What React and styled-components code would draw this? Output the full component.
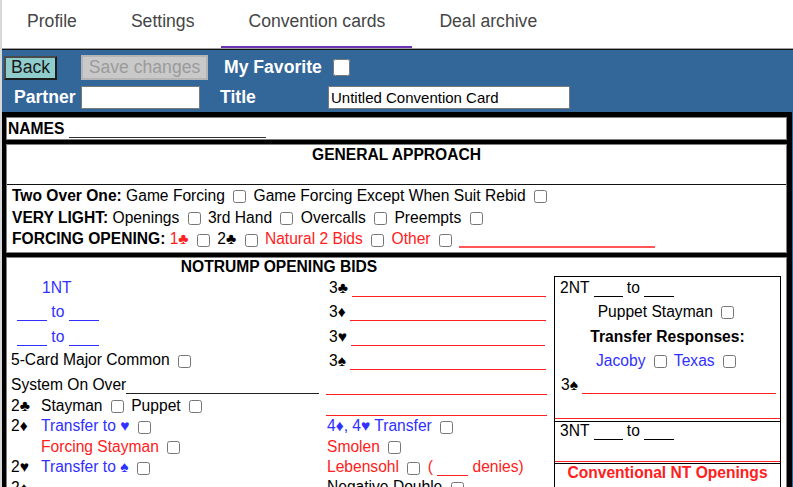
import styled, { createGlobalStyle } from "styled-components";

const BLUE = "#3030ff";
const RED = "#ff2020";

const GlobalStyle = createGlobalStyle`
  html, body {
    margin: 0;
    padding: 0;
    background: #fff;
    overflow: hidden;
  }
  body {
    font-family: "Liberation Sans", Arial, sans-serif;
    color: #000;
  }
`;

const Page = styled.div`
  border-left: 2px solid #d9d9d9;
  height: 487px;
  overflow: hidden;
`;

const TabBar = styled.nav`
  display: flex;
  height: 48px;
  margin-left: -2px;
  border-bottom: 1px solid #a0a0a0;
`;

const Tab = styled.div`
  box-sizing: border-box;
  height: 48px;
  padding: 0 27px;
  font-size: 17.6px;
  line-height: 42px;
  color: #454545;
  border-bottom: 2px solid ${(p) => (p.$active ? "#6c34b4" : "transparent")};
`;

const Editor = styled.section`
  background: #336699;
  border-top: 1px solid #111;
`;

const HeaderGrid = styled.div`
  display: grid;
  grid-template-columns: 77px 137px 110px 1fr;
  grid-template-rows: 27px 25px;
  row-gap: 4px;
  padding: 4px 0 2px;
  align-items: center;
`;

const HeadCell = styled.div`
  display: flex;
  align-items: center;
  margin-left: ${(p) => p.$indent || 0}px;
`;

const Button = styled.button`
  box-sizing: border-box;
  height: ${(p) => (p.$disabled ? 25 : 24)}px;
  width: ${(p) => (p.$disabled ? 127 : 53)}px;
  padding: 0;
  font: 17.6px "Liberation Sans", Arial, sans-serif;
  line-height: 1;
  border: 2px solid;
  background: ${(p) => (p.$disabled ? "#c9c9c9" : "#8fcccc")};
  color: ${(p) => (p.$disabled ? "#9b9b9b" : "#1a1a1a")};
  border-color: ${(p) =>
    p.$disabled ? "#b4b4b4" : "#4a4a4a #1c1c1c #1c1c1c #4a4a4a"};
`;

const HeadLabel = styled.span`
  color: #fff;
  font-weight: bold;
  font-size: 17.6px;
`;

const BigCheck = styled.input.attrs({ type: "checkbox" })`
  width: 17px;
  height: 17px;
  margin: 0;
`;

const TextField = styled.input.attrs({ type: "text" })`
  box-sizing: border-box;
  width: ${(p) => p.$w}px;
  height: 23px;
  margin: 0;
  padding: 0 2px;
  border: 1px solid #7a7a7a;
  font: 15px "Liberation Sans", Arial, sans-serif;
  color: #000;
  background: #fff;
`;

const Card = styled.div`
  background: #000;
  padding: 5px 5px 0 4px;
  margin-right: 1px;
  display: flex;
  flex-direction: column;
  gap: 4px;
  font-size: 15.6px;
`;

const Box = styled.div`
  background: #fff;
  border: 1px solid #808080;
`;

const NamesRow = styled.div`
  height: 21px;
  line-height: 21px;
  padding-left: 1px;
  white-space: nowrap;
`;

const Bold = styled.b`
  font-weight: bold;
`;

const Txt = styled.span`
  color: ${(p) => p.$c};
`;

const Title = styled.div`
  box-sizing: border-box;
  height: 40px;
  padding-top: 1px;
  text-align: center;
  font-weight: bold;
  line-height: 17px;
  border-bottom: 1px solid #111;
`;

const GARow = styled.div`
  height: 21.7px;
  line-height: 21.7px;
  padding-left: 5px;
  white-space: nowrap;
  &:last-child {
    margin-bottom: 2px;
  }
`;

const Check = styled.input.attrs({ type: "checkbox" })`
  width: 13px;
  height: 13px;
  margin: 3px 3px 3px 4px;
  vertical-align: middle;
`;

const Blank = styled.span`
  display: inline-block;
  width: ${(p) => p.$w}px;
  height: 12px;
  border-bottom: ${(p) => p.$t || 1}px solid ${(p) => p.$c || "currentColor"};
  vertical-align: -4px;
`;

const NTGrid = styled.div`
  display: grid;
  grid-template-columns: 318px 226px 1fr;
  grid-template-rows: 18px 23px 25px 25px 24px 23px 21px 20px 21px 20px 20px;
`;

const NTHeader = styled.div`
  grid-column: 1 / 3;
  grid-row: 1;
  text-align: center;
  font-weight: bold;
  line-height: 18px;
`;

const NTCell = styled.div`
  grid-column: ${(p) => p.$col};
  align-self: center;
  white-space: nowrap;
  padding-left: ${(p) => p.$pad ?? 4}px;
  color: ${(p) => p.$c || "inherit"};
`;

const RuleCell = styled.div`
  grid-column: 2;
  align-self: end;
  height: 1px;
  margin: 0 4px 1px 1px;
  background: ${RED};
`;

const Suit = styled.span`
  display: inline-block;
  width: 30px;
  color: #000;
`;

const Col3 = styled.div`
  grid-column: 3;
  grid-row: 2 / 12;
  margin: 0 5px 0 3px;
  border-left: 1px solid #000;
  border-right: 1px solid #000;
  display: flex;
  flex-direction: column;
`;

const Section = styled.div`
  border-top: 1px solid #000;
  height: ${(p) => (p.$h ? `${p.$h}px` : "auto")};
  display: flex;
  flex-direction: column;
`;

const Line = styled.div`
  height: ${(p) => p.$h}px;
  line-height: ${(p) => p.$h}px;
  text-align: ${(p) => (p.$center ? "center" : "left")};
  padding-left: ${(p) => p.$pad || 0}px;
  white-space: nowrap;
  color: ${(p) => p.$c || "inherit"};
  font-weight: ${(p) => (p.$bold ? "bold" : "normal")};
`;

const RedRule = styled.div`
  margin-top: auto;
  height: 1px;
  background: ${RED};
  margin-bottom: ${(p) => p.$gap}px;
`;

const tabs = ["Profile", "Settings", "Convention cards", "Deal archive"];

export default function App() {
  return (
    <Page>
      <GlobalStyle />
      <TabBar>
        {tabs.map((t) => (
          <Tab key={t} $active={t === "Convention cards"}>
            {t}
          </Tab>
        ))}
      </TabBar>
      <Editor>
        <HeaderGrid>
          <HeadCell $indent={2}>
            <Button>Back</Button>
          </HeadCell>
          <HeadCell $indent={2}>
            <Button $disabled disabled>
              Save changes
            </Button>
          </HeadCell>
          <HeadCell $indent={8}>
            <HeadLabel>My Favorite</HeadLabel>
          </HeadCell>
          <HeadCell $indent={7}>
            <BigCheck />
          </HeadCell>
          <HeadCell $indent={12}>
            <HeadLabel>Partner</HeadLabel>
          </HeadCell>
          <HeadCell $indent={2}>
            <TextField $w={119} defaultValue="" />
          </HeadCell>
          <HeadCell $indent={4}>
            <HeadLabel>Title</HeadLabel>
          </HeadCell>
          <HeadCell $indent={2}>
            <TextField $w={242} defaultValue="Untitled Convention Card" />
          </HeadCell>
        </HeaderGrid>

        <Card>
          <Box>
            <NamesRow>
              <Bold>NAMES</Bold> <Blank $w={197} $c="#333" />
            </NamesRow>
          </Box>

          <Box>
            <Title>GENERAL APPROACH</Title>
            <GARow>
              <Bold>Two Over One:</Bold> Game Forcing <Check /> Game Forcing
              Except When Suit Rebid <Check />
            </GARow>
            <GARow>
              <Bold>VERY LIGHT:</Bold> Openings <Check /> 3rd Hand <Check />{" "}
              Overcalls <Check /> Preempts <Check />
            </GARow>
            <GARow>
              <Bold>FORCING OPENING:</Bold> <Txt $c={RED}>1♣</Txt> <Check /> 2♣{" "}
              <Check /> <Txt $c={RED}>Natural 2 Bids</Txt> <Check />{" "}
              <Txt $c={RED}>Other</Txt> <Check />{" "}
              <Blank $w={196} $c="#ff5555" $t={2} />
            </GARow>
          </Box>

          <Box>
            <NTGrid>
              <NTHeader>NOTRUMP OPENING BIDS</NTHeader>

              <NTCell $col={1} $pad={35} $c={BLUE}>
                1NT
              </NTCell>
              <NTCell $col={2} $pad={4}>
                3♣ <Blank $w={194} $c={RED} />
              </NTCell>

              <NTCell $col={1} $pad={10} $c={BLUE}>
                <Blank $w={30} /> to <Blank $w={30} />
              </NTCell>
              <NTCell $col={2} $pad={4}>
                3♦ <Blank $w={196} $c={RED} />
              </NTCell>

              <NTCell $col={1} $pad={10} $c={BLUE}>
                <Blank $w={30} /> to <Blank $w={30} />
              </NTCell>
              <NTCell $col={2} $pad={4}>
                3♥ <Blank $w={194} $c={RED} />
              </NTCell>

              <NTCell $col={1}>
                5-Card Major Common <Check />
              </NTCell>
              <NTCell $col={2} $pad={4}>
                3♠ <Blank $w={196} $c={RED} />
              </NTCell>

              <NTCell $col={1}>
                System On Over
                <Blank $w={193} $c="#222" />
              </NTCell>
              <RuleCell />

              <NTCell $col={1}>
                <Suit>2♣</Suit>Stayman <Check /> Puppet <Check />
              </NTCell>
              <RuleCell />

              <NTCell $col={1} $c={BLUE}>
                <Suit>2♦</Suit>Transfer to ♥ <Check />
              </NTCell>
              <NTCell $col={2} $pad={2} $c={BLUE}>
                4♦, 4♥ Transfer <Check />
              </NTCell>

              <NTCell $col={1} $pad={34} $c={RED}>
                Forcing Stayman <Check />
              </NTCell>
              <NTCell $col={2} $pad={2} $c={RED}>
                Smolen <Check />
              </NTCell>

              <NTCell $col={1} $c={BLUE}>
                <Suit>2♥</Suit>Transfer to ♠ <Check />
              </NTCell>
              <NTCell $col={2} $pad={2} $c={RED}>
                Lebensohl <Check /> ( <Blank $w={31} /> denies)
              </NTCell>

              <NTCell $col={1}>
                <Suit>2♠</Suit>
              </NTCell>
              <NTCell $col={2} $pad={2}>
                Negative Double <Check />
              </NTCell>

              <Col3>
                <Section $h={144}>
                  <Line $h={22} $pad={5}>
                    2NT <Blank $w={29} /> to <Blank $w={30} />
                  </Line>
                  <Line $h={25} $center>
                    Puppet Stayman <Check />
                  </Line>
                  <Line $h={25} $center $bold>
                    Transfer Responses:
                  </Line>
                  <Line $h={24} $center $c={BLUE}>
                    Jacoby <Check /> Texas <Check />
                  </Line>
                  <Line $h={24} $pad={6}>
                    3♠ <Blank $w={194} $c={RED} />
                  </Line>
                  <RedRule $gap={2} />
                </Section>
                <Section $h={41}>
                  <Line $h={17} $pad={5}>
                    3NT <Blank $w={29} /> to <Blank $w={30} />
                  </Line>
                  <RedRule $gap={1} />
                </Section>
                <Section>
                  <Line $h={17} $center $bold $c={RED}>
                    Conventional NT Openings
                  </Line>
                </Section>
              </Col3>
            </NTGrid>
          </Box>
        </Card>
      </Editor>
    </Page>
  );
}
